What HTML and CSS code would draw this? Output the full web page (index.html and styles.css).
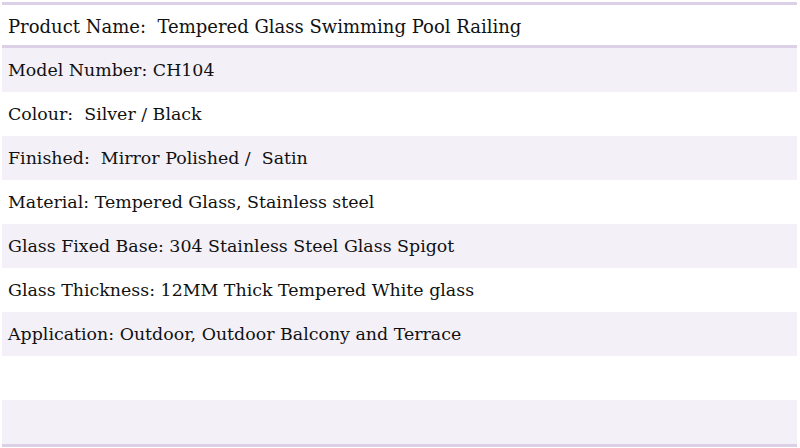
FILE: index.html
```html
<!DOCTYPE html>
<html>
<head>
<meta charset="utf-8">
<link rel="stylesheet" href="styles.css">
</head>
<body>
<div class="spec">
  <div class="row head">Product Name:&nbsp; Tempered Glass Swimming Pool Railing</div>
  <div class="row alt">Model Number: CH104</div>
  <div class="row">Colour:&nbsp; Silver / Black</div>
  <div class="row alt">Finished:&nbsp; Mirror Polished /&nbsp; Satin</div>
  <div class="row">Material: Tempered Glass, Stainless steel</div>
  <div class="row alt">Glass Fixed Base: 304 Stainless Steel Glass Spigot</div>
  <div class="row">Glass Thickness: 12MM Thick Tempered White glass</div>
  <div class="row alt">Application: Outdoor, Outdoor Balcony and Terrace</div>
  <div class="row"></div>
  <div class="row alt"></div>
</div>
</body>
</html>
```
FILE: styles.css
```css
html, body {
  margin: 0;
  padding: 0;
  background: #ffffff;
}
.spec {
  margin: 2px 3px 0 2px;
  border-top: 3px solid #dcd0e7;
  border-bottom: 3px solid #dcd0e7;
  font-family: "DejaVu Serif", serif;
  font-size: 17.4px;
  color: #111111;
}
.row {
  height: 44px;
  display: flex;
  align-items: center;
  padding: 0 6px;
  background: #ffffff;
  white-space: pre;
}
.row.alt {
  background: #f3f0f8;
}
.row.head {
  box-sizing: border-box;
  height: 43px;
  padding-top: 2px;
  border-bottom: 3px solid #dcd0e7;
  font-size: 18px;
}
```
